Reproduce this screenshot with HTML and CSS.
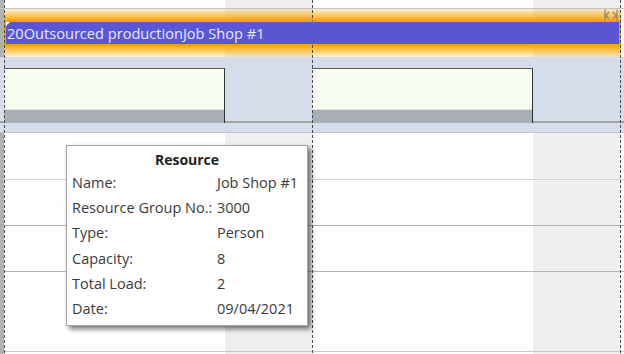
FILE: index.html
```html
<!DOCTYPE html>
<html lang="en">
<head>
    <meta charset="UTF-8">
    <meta name="viewport" content="width=device-width, initial-scale=1.0">
    <title>Resource chart</title>
    <link rel="stylesheet" href="styles.css">
</head>
<body>
    <div class="chart">
        <div class="top"></div>

        <div class="lane">
            <svg class="grip" width="14" height="13" viewBox="0 0 14 13">
                <path d="M1 0.5v12M13 0.5v12M5 3L2 6.5L5 10M9 3L12 6.5L9 10" fill="none" stroke="#9a8666" stroke-width="1.3"/>
            </svg>
            <div class="bar">
                <span class="corner"></span>
                20Outsourced productionJob Shop #1
            </div>
        </div>

        <div class="band">
            <div class="cell"><div class="box"><div class="load"></div></div></div>
            <div class="cell"><div class="box"><div class="load"></div></div></div>
        </div>
        <div class="sep"></div>

        <div class="row r1"></div>
        <div class="row r2"></div>
        <div class="row r3"></div>
        <div class="row r4"></div>

        <div class="gridlines">
            <div class="gl first"></div>
            <div class="gl day"></div>
            <div class="gl day"></div>
            <div class="gl last"></div>
        </div>

        <div class="tip">
            <div class="tip-title">Resource</div>
            <table>
                <tr><td>Name:</td><td>Job Shop #1</td></tr>
                <tr><td>Resource Group No.:</td><td>3000</td></tr>
                <tr><td>Type:</td><td>Person</td></tr>
                <tr><td>Capacity:</td><td>8</td></tr>
                <tr><td>Total Load:</td><td>2</td></tr>
                <tr><td>Date:</td><td>09/04/2021</td></tr>
            </table>
        </div>
    </div>
</body>
</html>
```

FILE: styles.css
```css
*{margin:0;padding:0;box-sizing:border-box}
body{
    width: 624px;
    height: 354px;
    overflow: hidden;
    font-family: "Open Sans", "Noto Sans", sans-serif;
    color: #333;
}
.chart{
    position: relative;
    width: 624px;
    height: 354px;
    background: linear-gradient(to right,
        #b1b1b1 0 4px,
        #fff 4px 225px,
        #efefef 225px 312px,
        #fff 312px 533px,
        #efefef 533px 620px,
        #fafafa 620px);
}

.top{
    height: 9px;
    border-bottom: 1px solid #c4c4c4;
}

.lane{
    position: relative;
    height: 48px;
    padding: 12px 5px 0 5px;
    margin: 0 3px 0 4px;
    background: linear-gradient(to bottom,
        rgba(255,178,20,0.18) 0,
        rgba(255,175,10,0.55) 5px,
        rgba(248,162,0,1) 12px,
        rgba(248,162,0,1) 36px,
        rgba(255,175,10,0.55) 43px,
        rgba(255,178,20,0.18) 48px);
}
.grip{
    position: absolute;
    top: 0;
    right: 3px;
    z-index: 3;
}
.bar{
    position: relative;
    z-index: 2;
    margin-left: -4px;
    margin-right: -4px;
    height: 24px;
    background: #5a57d5;
    border: 1px solid #f2a100;
    color: #e8e8f6;
    font-size: 14.6px;
    line-height: 22px;
    padding-left: 1px;
    white-space: nowrap;
}
.corner{
    position: absolute;
    left: 0;
    top: 0;
    border-top: 4px solid #fff;
    border-right: 4px solid transparent;
}

.band{
    display: flex;
    height: 66px;
    padding: 11px 0 0 4px;
    background: #d5dcea;
    border-bottom: 2px solid #a2a2a2;
}
.cell{
    width: 308px;
}
.box{
    width: 221px;
    height: 55px;
    display: flex;
    flex-direction: column;
    justify-content: flex-end;
    background: #f7fdf1;
    border-top: 1px solid #5c5c5c;
    border-right: 1px solid #333;
}
.load{
    height: 14px;
    background: #a8adb6;
    border-top: 1px solid #dfe3e8;
}
.sep{
    height: 10px;
    background: #d5dcea;
    border-bottom: 1px solid #c6c6c6;
}

.row{
    margin-left: 4px;
    border-bottom: 1px solid #b4b4b4;
}
.r1{height: 47px; border-bottom-color: #d2d2d2}
.r2{height: 46px}
.r3{height: 46px}
.r4{height: 80px; border-bottom-color: #c8c8c8}

.gridlines{
    position: absolute;
    inset: 0;
    z-index: 1;
    display: flex;
    pointer-events: none;
}
.gl{
    height: 100%;
    background: repeating-linear-gradient(to bottom, #4a4a4a 0 3px, transparent 3px 5px) no-repeat left top / 1px 100%;
}
.first{width: 4px; background: none}
.day{width: 308px}
.last{flex: 1}

.tip{
    position: absolute;
    z-index: 4;
    left: 66px;
    top: 145px;
    width: 242px;
    height: 181px;
    background: #fff;
    border: 1px solid #a3a3a3;
    box-shadow: 3px 3px 5px rgba(0,0,0,0.55);
    padding: 4px 5px 0 5px;
    font-size: 14.5px;
}
.tip-title{
    text-align: center;
    font-weight: bold;
    font-size: 14px;
    line-height: 20px;
    color: #222;
}
.tip table{
    border-collapse: collapse;
}
.tip td{
    height: 25.2px;
    padding: 0;
    white-space: nowrap;
    color: #3a3a3a;
}
.tip td:first-child{
    width: 145px;
}
```
